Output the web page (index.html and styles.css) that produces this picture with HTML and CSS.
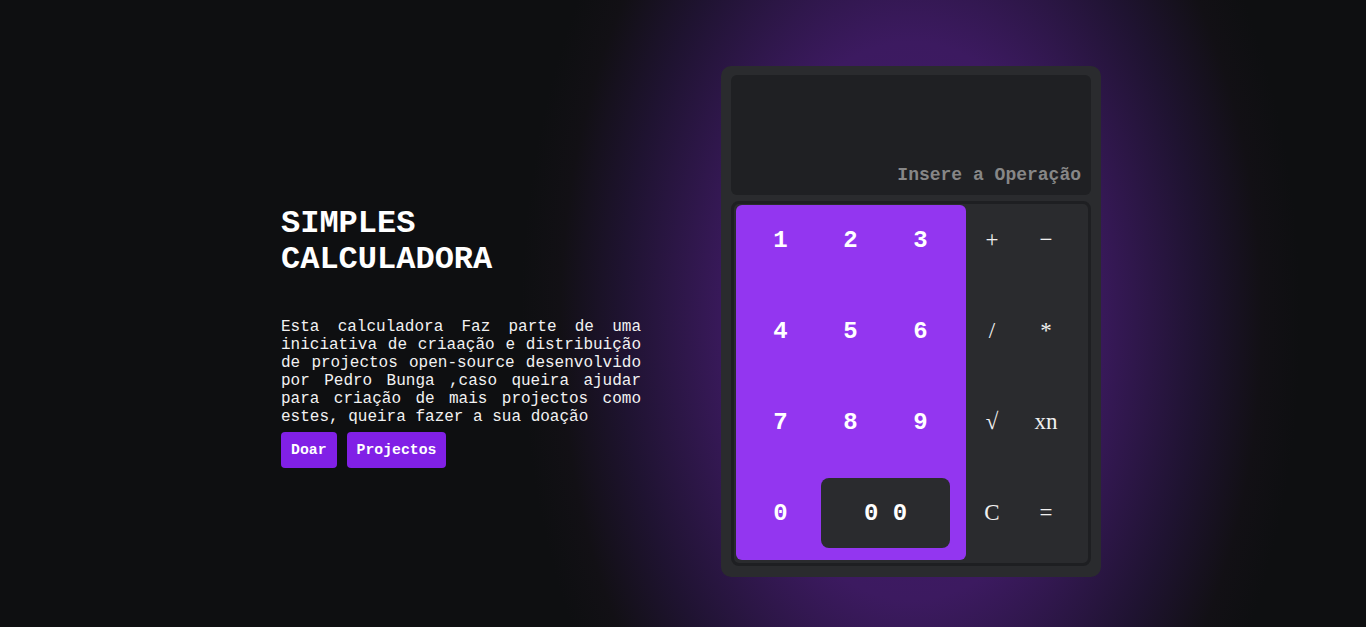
FILE: index.html
```html
<!DOCTYPE html>
<html lang="pt">
<head>
<meta charset="utf-8">
<title>Simples Calculadora</title>
<link rel="stylesheet" href="styles.css">
</head>
<body>
<main class="page">
  <section class="intro">
    <h1 class="title">SIMPLES CALCULADORA</h1>
    <p class="desc">Esta calculadora Faz parte de uma iniciativa de criaação e distribuição de projectos open-source desenvolvido por Pedro Bunga ,caso queira ajudar para criação de mais projectos como estes, queira fazer a sua doação</p>
    <div class="actions">
      <button class="btn">Doar</button>
      <button class="btn">Projectos</button>
    </div>
  </section>
  <section class="calc">
    <div class="display"><span class="placeholder">Insere a Operação</span></div>
    <div class="keypad">
      <div class="digits">
        <button class="key">1</button>
        <button class="key">2</button>
        <button class="key">3</button>
        <button class="key">4</button>
        <button class="key">5</button>
        <button class="key">6</button>
        <button class="key">7</button>
        <button class="key">8</button>
        <button class="key">9</button>
        <button class="key">0</button>
        <button class="key key-wide">0 0</button>
      </div>
      <div class="ops">
        <button class="op">+</button>
        <button class="op">−</button>
        <button class="op">/</button>
        <button class="op">*</button>
        <button class="op">√</button>
        <button class="op">xn</button>
        <button class="op">C</button>
        <button class="op">=</button>
      </div>
    </div>
  </section>
</main>
</body>
</html>
```
FILE: styles.css
```css
* { box-sizing: border-box; }
html, body { margin: 0; padding: 0; }
body {
  background: #0e0f11;
  font-family: "Liberation Mono", "Courier New", monospace;
  color: #fff;
  overflow: hidden;
}
.page {
  display: flex;
  justify-content: center;
  align-items: center;
  gap: 80px;
  height: 627px;
  padding: 16px 0 0 16px;
  background: radial-gradient(ellipse 390px 620px at 911px 321px, #42196b 0%, #3c1a60 45%, #1f1331 74%, #121015 90%, #0e0f11 100%);
}
.intro {
  width: 360px;
  margin-top: 31px;
}
.title {
  margin: 0 0 40px;
  font-size: 32px;
  line-height: 36px;
  font-weight: bold;
  color: #fff;
}
.desc {
  margin: 0;
  font-size: 16px;
  line-height: 18px;
  text-align: justify;
  color: #f2f2f2;
}
.actions {
  display: flex;
  gap: 10px;
  margin-top: 6px;
}
.btn {
  height: 36px;
  padding: 0 10px;
  border: none;
  border-radius: 4px;
  background: #8120e6;
  color: #fff;
  font-family: "Liberation Mono", "Courier New", monospace;
  font-weight: bold;
  font-size: 14.8px;
}
.calc {
  width: 380px;
  height: 511px;
  padding: 9px 10px 11px;
  background: #2a2b2e;
  border-radius: 10px;
  display: flex;
  flex-direction: column;
  gap: 6px;
}
.display {
  height: 120px;
  background: #1f2023;
  border-radius: 6px;
  display: flex;
  align-items: flex-end;
  justify-content: flex-end;
  padding: 0 10px 10px;
}
.placeholder {
  font-size: 18px;
  font-weight: bold;
  color: #878787;
}
.keypad {
  flex: 1;
  display: flex;
  border: 3px solid #1e1f22;
  border-radius: 8px;
  padding: 1px 2px 3px;
}
.digits {
  width: 230px;
  background: #9336f0;
  border-radius: 6px;
  display: grid;
  grid-template-columns: repeat(3, 59px);
  grid-template-rows: repeat(4, 70px);
  column-gap: 11px;
  row-gap: 21px;
  padding: 0 16px 12px 15px;
}
.key {
  border: none;
  background: transparent;
  color: #fff;
  font-family: "Liberation Mono", "Courier New", monospace;
  font-weight: bold;
  font-size: 24px;
  padding: 0;
}
.key-wide {
  grid-column: span 2;
  background: #2a2b2e;
  border-radius: 8px;
}
.ops {
  display: grid;
  grid-template-columns: 52px 56px;
  grid-template-rows: repeat(4, 70px);
  row-gap: 21px;
  align-content: start;
}
.op {
  border: none;
  background: transparent;
  color: #f0f0f0;
  font-family: "Liberation Serif", "Times New Roman", serif;
  font-size: 23px;
  padding: 0;
}
```
